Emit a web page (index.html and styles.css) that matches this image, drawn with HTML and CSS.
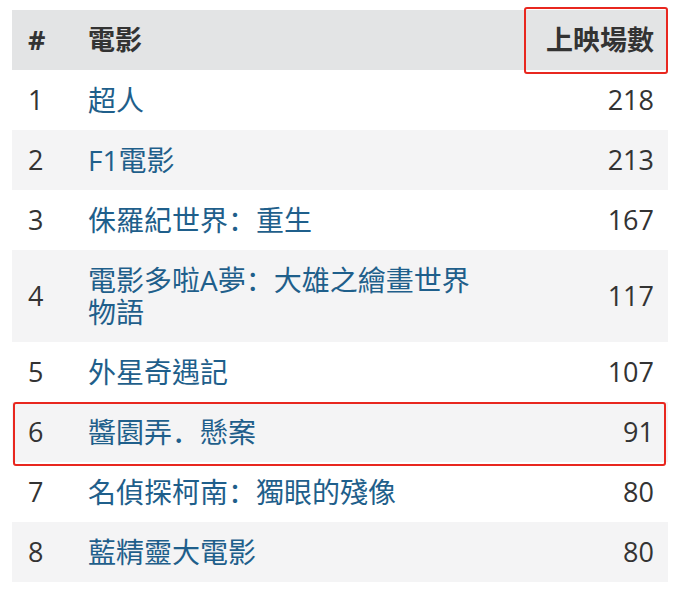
FILE: index.html
```html
<!DOCTYPE html>
<html lang="zh-Hant">
<head>
<meta charset="utf-8">
<link rel="stylesheet" href="styles.css">
</head>
<body>
<div class="table">
  <div class="row head">
    <div class="c-rank">#</div>
    <div class="c-title">電影</div>
    <div class="c-count hl-cell">上映場數</div>
  </div>
  <div class="row">
    <div class="c-rank">1</div>
    <div class="c-title"><a href="#">超人</a></div>
    <div class="c-count">218</div>
  </div>
  <div class="row alt">
    <div class="c-rank">2</div>
    <div class="c-title"><a href="#">F1電影</a></div>
    <div class="c-count">213</div>
  </div>
  <div class="row">
    <div class="c-rank">3</div>
    <div class="c-title"><a href="#">侏羅紀世界<span class="p" lang="zh-CN">：</span>重生</a></div>
    <div class="c-count">167</div>
  </div>
  <div class="row alt">
    <div class="c-rank">4</div>
    <div class="c-title"><a href="#">電影多啦A夢<span class="p" lang="zh-CN">：</span>大雄之繪畫世界物語</a></div>
    <div class="c-count">117</div>
  </div>
  <div class="row">
    <div class="c-rank">5</div>
    <div class="c-title"><a href="#">外星奇遇記</a></div>
    <div class="c-count">107</div>
  </div>
  <div class="row alt hl-row">
    <div class="c-rank">6</div>
    <div class="c-title"><a href="#">醬園弄<span class="p" lang="zh-CN">．</span>懸案</a></div>
    <div class="c-count">91</div>
  </div>
  <div class="row">
    <div class="c-rank">7</div>
    <div class="c-title"><a href="#">名偵探柯南<span class="p" lang="zh-CN">：</span>獨眼的殘像</a></div>
    <div class="c-count">80</div>
  </div>
  <div class="row alt">
    <div class="c-rank">8</div>
    <div class="c-title"><a href="#">藍精靈大電影</a></div>
    <div class="c-count">80</div>
  </div>
</div>
</body>
</html>
```

FILE: styles.css
```css
* { box-sizing: border-box; }
body {
  margin: 0;
  padding: 10px 14px 0 12px;
  background: #ffffff;
  font-family: "Open Sans", "Noto Sans CJK TC", sans-serif;
  font-size: 27px;
  color: #333333;
}
.table {
  width: 656px;
  display: flex;
  flex-direction: column;
}
.row {
  display: grid;
  grid-template-columns: 60px 452px 144px;
  align-items: center;
  line-height: 32px;
  min-height: 60px;
  padding: 14px 0;
}
.row.alt { background: #f4f4f5; }
.row.head {
  background: #e3e4e5;
  font-weight: 700;
  color: #333333;
}
.c-rank { padding-left: 16px; }
.c-title {
  padding: 0 40px 0 16px;
  font-size: 28px;
  line-height: 32px;
  height: auto;
}
.row.head .c-title { font-size: 27px; }
.c-count { text-align: right; padding-right: 14px; }
.c-title a {
  color: #1f5f8b;
  text-decoration: none;
}
.p {
  font-family: "Noto Sans CJK SC", sans-serif;
  line-height: 20px;
  vertical-align: baseline;
}
.hl-cell { position: relative; }
.hl-cell::after {
  content: "";
  position: absolute;
  left: 0;
  right: 0;
  top: -17px;
  bottom: -18px;
  border: 2px solid #e8271f;
  border-radius: 3px;
}
.hl-row { position: relative; }
.hl-row::after {
  content: "";
  position: absolute;
  left: 1px;
  right: 2px;
  top: 0;
  bottom: -4px;
  border: 2px solid #e8271f;
  border-radius: 3px;
}
```
